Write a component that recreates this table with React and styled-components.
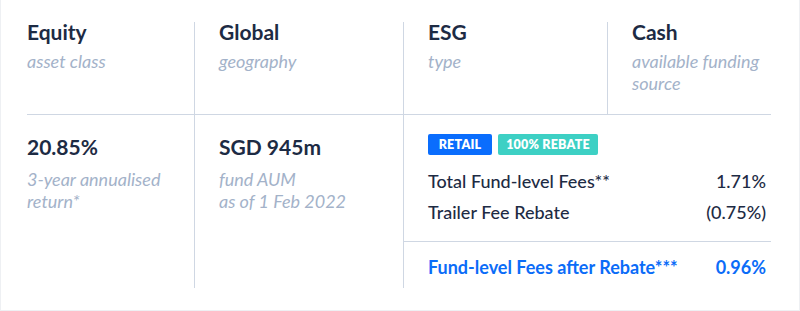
import styled, { createGlobalStyle } from 'styled-components'

const GlobalStyle = createGlobalStyle`
    body {
        margin: 0;
        background: #fff;
        font-family: Lato, "Noto Sans", sans-serif;
        color: #1d2b44;
    }
`

const Card = styled.section`
    box-sizing: border-box;
    width: 800px;
    height: 311px;
    padding: 22px 28px 0 26px;
    border: 1px solid #eef0f3;
    border-top: none;
    background: #fff;
`
const Row = styled.div`
    display: grid;
    grid-template-columns: ${({ cols }) => cols};
    border-bottom: ${({ lined }) => (lined ? '1px solid #cfd7e3' : 'none')};
`
const Cell = styled.div`
    padding: ${({ top }) => top}px 0 20px ${({ first }) => (first ? 0 : 24)}px;
    border-left: ${({ first }) => (first ? 'none' : '1px solid #cfd7e3')};
`
const Title = styled.div`
    font-size: 21px;
    line-height: 20px;
    font-weight: 700;
    color: #1d2b44;
`
const Caption = styled.div`
    margin-top: ${({ gap }) => gap}px;
    font-size: 18px;
    line-height: 22px;
    font-style: italic;
    color: #a3b2c9;
`
const FeeCell = styled.div`
    border-left: 1px solid #cfd7e3;
    padding-top: 19px;
`
const Badges = styled.div`
    display: flex;
    gap: 6px;
    padding-left: 24px;
`
const Badge = styled.span`
    display: inline-flex;
    align-items: center;
    justify-content: center;
    height: 21px;
    width: ${({ w }) => w}px;
    border-radius: 2px;
    background: ${({ bg }) => bg};
    color: #fff;
    font-size: 12.5px;
    font-weight: 800;
    letter-spacing: 0.2px;
`
const FeeList = styled.div`
    margin-top: 11px;
    padding: 0 5px 13px 24px;
    border-bottom: 1px solid #cfd7e3;
`
const FeeRow = styled.div`
    display: flex;
    justify-content: space-between;
    font-size: 18px;
    line-height: 31px;
    font-weight: 500;
    color: ${({ accent }) => (accent ? '#0b6cf8' : '#1d2b44')};
    ${({ accent }) => accent && 'font-weight: 700;'}
`
const Total = styled.div`
    padding: 10px 5px 5px 24px;
`

const facts = [
    { title: 'Equity', caption: 'asset class' },
    { title: 'Global', caption: 'geography' },
    { title: 'ESG', caption: 'type' },
    { title: 'Cash', caption: <>available funding<br />source</> },
]

const App = () => {
    return (
        <>
            <GlobalStyle />
            <Card>
                <Row cols="167px 209px 204px 1fr" lined>
                    {facts.map((f, i) => (
                        <Cell key={f.title} first={i === 0} top={0}>
                            <Title>{f.title}</Title>
                            <Caption gap={8}>{f.caption}</Caption>
                        </Cell>
                    ))}
                </Row>
                <Row cols="167px 209px 1fr">
                    <Cell first top={22}>
                        <Title>20.85%</Title>
                        <Caption gap={11}>3-year annualised<br />return*</Caption>
                    </Cell>
                    <Cell top={22}>
                        <Title>SGD 945m</Title>
                        <Caption gap={11}>fund AUM<br />as of 1 Feb 2022</Caption>
                    </Cell>
                    <FeeCell>
                        <Badges>
                            <Badge w={64} bg="#0a6dfd">RETAIL</Badge>
                            <Badge w={100} bg="#3dd0c4">100% REBATE</Badge>
                        </Badges>
                        <FeeList>
                            <FeeRow>
                                <span>Total Fund-level Fees**</span>
                                <span>1.71%</span>
                            </FeeRow>
                            <FeeRow>
                                <span>Trailer Fee Rebate</span>
                                <span>(0.75%)</span>
                            </FeeRow>
                        </FeeList>
                        <Total>
                            <FeeRow accent>
                                <span>Fund-level Fees after Rebate***</span>
                                <span>0.96%</span>
                            </FeeRow>
                        </Total>
                    </FeeCell>
                </Row>
            </Card>
        </>
    )
}

export default App
